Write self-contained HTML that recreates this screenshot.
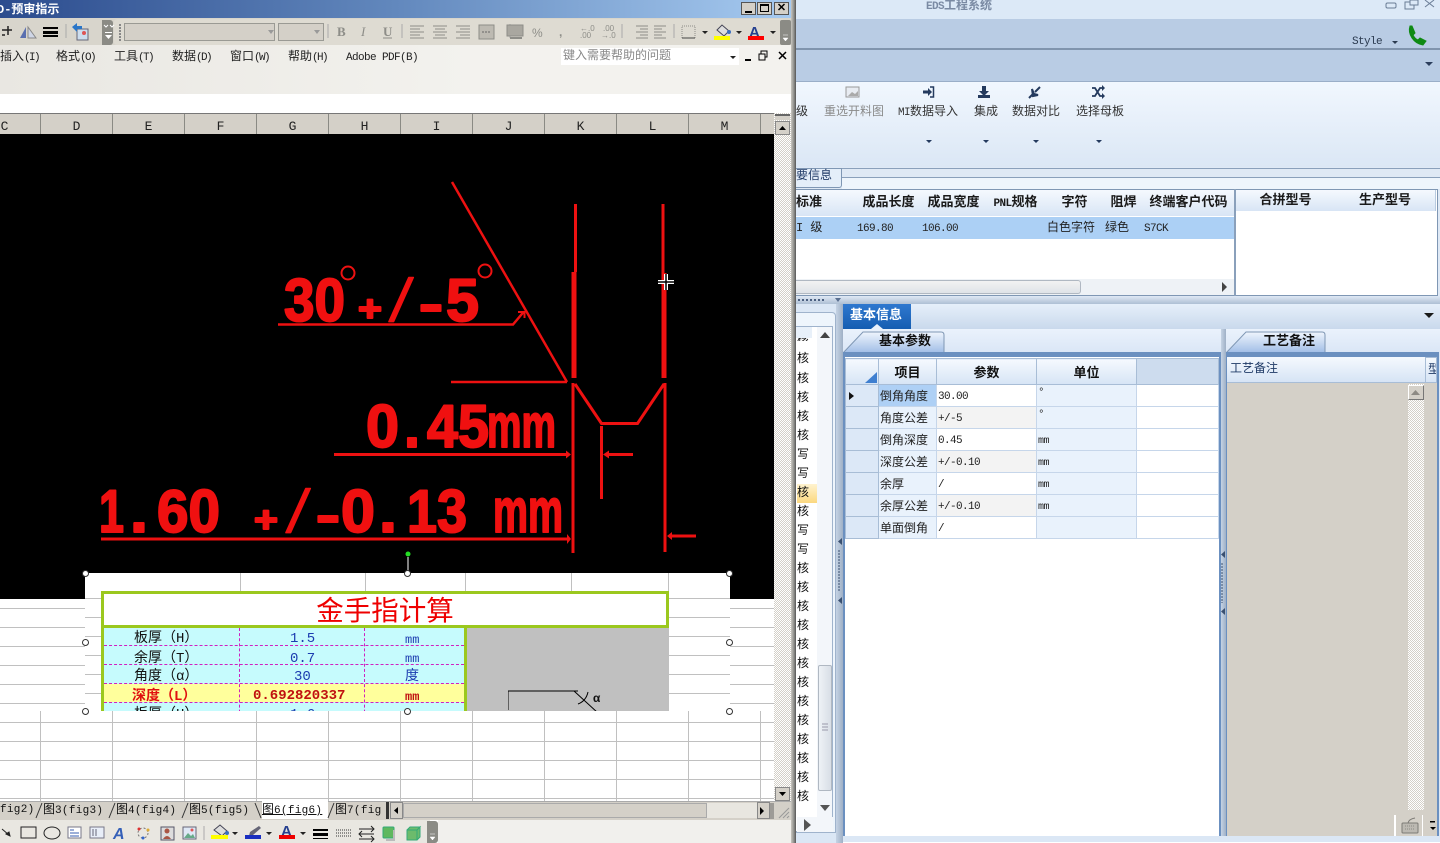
<!DOCTYPE html>
<html lang="zh"><head><meta charset="utf-8"><title>EDS工程系统</title>
<style>
html,body{margin:0;padding:0;width:1440px;height:843px;overflow:hidden;background:#fff}
body{position:relative;font:12px "Liberation Mono","WenQuanYi Zen Hei","Noto Sans CJK SC",monospace;color:#111}
.a{position:absolute}
.t{position:absolute;white-space:nowrap;line-height:14px}
.l{font-size:11px;letter-spacing:-.6px}
.hd{position:absolute;top:114px;height:20px;line-height:25px;width:71px;text-align:center;border-right:1px solid #8a8a84;font-size:13px;color:#222}
.menu{position:absolute;top:50px;white-space:nowrap;line-height:14px;color:#222}
.menu .l{font-size:11px;letter-spacing:-1.600px}
.menu .l.ad{letter-spacing:-.6px}
.hl{position:absolute;left:0;width:774px;height:1px;background:#c0c0c0}
.vl{position:absolute;width:1px;background:#c0c0c0}
.h{position:absolute;width:5px;height:5px;border:1px solid #333;border-radius:50%;background:#fff;z-index:5}
.gh{position:absolute;top:190px;height:26px;line-height:26px;text-align:center;font-weight:bold;font-size:13px;background:linear-gradient(#f5f9fe,#d8e5f5);border-right:1px solid #b9cbe0;color:#1a1a1a;white-space:nowrap;overflow:hidden}
.gc{position:absolute;top:217px;height:22px;line-height:22px;white-space:nowrap;color:#222}
.tabt{font-weight:bold;color:#111;font-size:13px}
table.g{position:absolute;left:845px;top:358px;border-collapse:collapse;table-layout:fixed;width:373px;z-index:2}
table.g th{height:25px;padding:0;background:linear-gradient(#f5f9fe,#d6e4f5);border:1px solid #a8bdd6;font-size:13px;color:#111}
table.g td{height:21px;padding:0 0 0 1px;border:1px solid #c6d6ea;font-size:12px;white-space:nowrap;color:#222;overflow:hidden}
table.g .rh{background:#dce8f7;border-color:#a8bdd6}
table.g .n{background:#e9f2fc}
table.g .u{background:#e9f2fc}
table.g .alt{background:#f3f3f3}
.lst{position:absolute;left:797px;font-size:12px;line-height:14px;color:#111}
.tb{font-size:11px;letter-spacing:.3px}
</style></head><body>

<!-- LEFT WINDOW -->
<div class="a" style="left:0;top:0;width:791px;height:18px;background:linear-gradient(90deg,#2c4c8e,#6288bd 50%,#a6caf0)"></div>
<div class="t" style="left:-3px;top:3px;color:#fff;font-weight:bold">D-预审指示</div>
<div class="a" style="left:741px;top:2px;width:15px;height:13px;background:#d4d0c8;border:1px solid #555;box-sizing:border-box"><div class="a" style="left:3px;top:8px;width:7px;height:2px;background:#000"></div></div>
<div class="a" style="left:757px;top:2px;width:15px;height:13px;background:#d4d0c8;border:1px solid #555;box-sizing:border-box"><div class="a" style="left:2px;top:1px;width:9px;height:8px;border:1px solid #000;border-top-width:2px;box-sizing:border-box"></div></div>
<div class="a" style="left:774px;top:2px;width:15px;height:13px;background:#d4d0c8;border:1px solid #555;box-sizing:border-box;text-align:center;font:bold 11px/11px 'Liberation Sans',sans-serif;color:#000">✕</div>

<!-- toolbar -->
<div class="a" style="left:0;top:18px;width:791px;height:27px;background:#d8d5cc"></div>
<div class="a" style="left:102px;top:20px;width:11px;height:25px;background:#8b8b85;border-radius:0 3px 3px 0"></div>
<div class="a" style="left:114px;top:19px;width:670px;height:26px;background:#dedbd2;border-radius:3px"></div>
<div class="a" style="left:124px;top:23px;width:151px;height:18px;background:#d4d0c8;border:1px solid #9a9a94;box-sizing:border-box"></div>
<div class="a" style="left:278px;top:23px;width:46px;height:18px;background:#d4d0c8;border:1px solid #9a9a94;box-sizing:border-box"></div>
<svg class="a" style="left:0;top:18px" width="795" height="27" viewBox="0 18 795 27">
<g fill="none" stroke="#222" stroke-width="1.500"><path d="M2 30h10M8 26v9M2 35h3"/></g>
<path d="M20 38l6-11v11z" fill="#5a6fb0"/><path d="M28 27l8 11h-8z" fill="#cfd6e6" stroke="#888"/>
<rect x="43" y="27" width="15" height="2" fill="#000"/><rect x="43" y="31" width="15" height="3" fill="#000"/><rect x="43" y="35" width="15" height="2" fill="#000"/>
<path d="M66 24v14" stroke="#aaa"/>
<rect x="77" y="29" width="11" height="11" fill="#cde" stroke="#667"/><path d="M72 27l5-4v3h5v3h-5v3z" fill="#2a76c8"/><circle cx="84" cy="33" r="2" fill="#d55"/>
<path d="M104 25l2 2 2-2M110 25l2 2 2-2" stroke="#fff" fill="none"/><path d="M105 35h7l-3.500 4zM105 32h7v1h-7z" fill="#fff"/>
<path d="M120 24v18" stroke="#888" stroke-width="2" stroke-dasharray="2 1"/>
<path d="M268 30h6l-3 4zM314 30h6l-3 4z" fill="#999"/>
<path d="M328 24v14M402 24v14M510 24v14M622 24v14M674 24v14" stroke="#aaa"/>
<g fill="#8d8d88" font-family="Liberation Serif" font-size="13"><text x="337" y="36" font-weight="bold">B</text><text x="361" y="36" font-style="italic">I</text><text x="383" y="36" font-weight="bold">U</text></g>
<path d="M383 38h9" stroke="#8d8d88"/>
<g stroke="#8d8d88" stroke-width="1"><path d="M410 26h14M410 29h10M410 32h14M410 35h10M410 38h14"/><path d="M433 26h14M435 29h10M433 32h14M435 35h10M433 38h14"/><path d="M456 26h14M460 29h10M456 32h14M460 35h10M456 38h14"/></g>
<rect x="479" y="25" width="15" height="14" fill="#bdbab2" stroke="#8d8d88"/><path d="M482 32h9" stroke="#666" stroke-dasharray="2 1"/>
<rect x="507" y="25" width="16" height="11" fill="#a9a7a0" stroke="#8d8d88"/><path d="M510 38h12" stroke="#8d8d88" stroke-width="2"/>
<g fill="#8d8d88" font-family="Liberation Sans" font-size="12"><text x="532" y="37">%</text><text x="559" y="36" font-weight="bold">,</text></g>
<g fill="#8d8d88" font-family="Liberation Sans" font-size="8"><text x="580" y="31">←.0</text><text x="580" y="38">.00</text><text x="603" y="31">.00</text><text x="601" y="38">→.0</text></g>
<g stroke="#8d8d88"><path d="M636 26h12M640 29h8M636 32h12M640 35h8M636 38h12M654 26h12M654 29h8M654 32h12M654 35h8M654 38h12"/></g>
<rect x="682" y="26" width="13" height="12" fill="none" stroke="#8d8d88" stroke-dasharray="1 1"/><path d="M682 38h13" stroke="#444"/>
<path d="M702 31h6l-3 3zM736 31h6l-3 3zM770 31h6l-3 3z" fill="#222"/>
<path d="M717 30l5-5 7 6-5 5z" fill="#ddd" stroke="#445"/><circle cx="729" cy="32" r="2" fill="#3a6fc0"/><rect x="714" y="36" width="16" height="4" fill="#ff0"/>
<text x="749" y="37" font-family="Liberation Sans" font-weight="bold" font-size="15" fill="#26408f">A</text><rect x="748" y="36" width="16" height="4" fill="#f00"/>
<rect x="780" y="20" width="11" height="25" rx="2" fill="#8b8b85"/><path d="M783 35h5M783 38h5l-2.500 3z" fill="#fff" stroke="#fff" stroke-width=".5"/>
</svg>

<!-- menu -->
<div class="a" style="left:0;top:45px;width:791px;height:49px;background:linear-gradient(90deg,#e9e7e2,#f3f2ee 60%)"></div>
<div class="menu" style="left:0">插入<span class="l">(I)</span></div>
<div class="menu" style="left:56px">格式<span class="l">(O)</span></div>
<div class="menu" style="left:114px">工具<span class="l">(T)</span></div>
<div class="menu" style="left:172px">数据<span class="l">(D)</span></div>
<div class="menu" style="left:230px">窗口<span class="l">(W)</span></div>
<div class="menu" style="left:288px">帮助<span class="l">(H)</span></div>
<div class="menu" style="left:346px"><span class="l ad">Adobe PDF(B)</span></div>
<div class="a" style="left:561px;top:48px;width:178px;height:17px;background:#fff"></div>
<div class="t" style="left:563px;top:49px;color:#888;line-height:14px">键入需要帮助的问题</div>
<svg class="a" style="left:725px;top:48px" width="66" height="17"><path d="M5 8h6l-3 3z" fill="#222"/><rect x="20" y="11" width="6" height="2" fill="#000"/><rect x="36" y="3" width="6" height="6" fill="none" stroke="#000"/><rect x="34" y="6" width="6" height="6" fill="#f3f2ee" stroke="#000"/><path d="M54 4l7 7M61 4l-7 7" stroke="#000" stroke-width="1.500"/></svg>
<div class="a" style="left:0;top:94px;width:791px;height:19px;background:#fff"></div>

<!-- column headers -->
<div class="a" style="left:0;top:113px;width:791px;height:21px;background:#d4d0c8;border-top:1px solid #777;box-sizing:border-box"></div>
<div class="hd" style="left:-31px">C</div><div class="hd" style="left:41px">D</div><div class="hd" style="left:113px">E</div><div class="hd" style="left:185px">F</div><div class="hd" style="left:257px">G</div><div class="hd" style="left:329px">H</div><div class="hd" style="left:401px">I</div><div class="hd" style="left:473px">J</div><div class="hd" style="left:545px">K</div><div class="hd" style="left:617px">L</div><div class="hd" style="left:689px">M</div>

<!-- sheet -->
<div class="a" style="left:0;top:134px;width:774px;height:667px;background:#fff"></div>
<div class="hl" style="top:608px"></div><div class="hl" style="top:627px"></div><div class="hl" style="top:646px"></div><div class="hl" style="top:665px"></div><div class="hl" style="top:684px"></div><div class="hl" style="top:703px"></div><div class="hl" style="top:722px"></div><div class="hl" style="top:741px"></div><div class="hl" style="top:760px"></div><div class="hl" style="top:779px"></div><div class="hl" style="top:798px"></div>
<div class="vl" style="left:40px;top:711px;height:90px"></div><div class="vl" style="left:112px;top:711px;height:90px"></div><div class="vl" style="left:184px;top:711px;height:90px"></div><div class="vl" style="left:256px;top:711px;height:90px"></div><div class="vl" style="left:328px;top:711px;height:90px"></div><div class="vl" style="left:400px;top:711px;height:90px"></div><div class="vl" style="left:472px;top:711px;height:90px"></div><div class="vl" style="left:544px;top:711px;height:90px"></div><div class="vl" style="left:616px;top:711px;height:90px"></div><div class="vl" style="left:688px;top:711px;height:90px"></div><div class="vl" style="left:760px;top:711px;height:90px"></div>

<!-- black drawing -->
<svg class="a" style="left:0;top:134px" width="774" height="465" viewBox="0 134 774 465">
<rect x="0" y="134" width="774" height="465" fill="#000"/>
<g fill="none" stroke="#ee1111" stroke-width="2.500">
<path d="M452 182L567 382"/><path d="M451 382h116"/>
<path d="M278 324.500h235l11-13"/><path d="M518 312h6.500v6" stroke-width="2"/>
<path d="M575.500 204v68" stroke-width="3"/><path d="M574 272v106" stroke-width="5"/>
<path d="M663 204v69" stroke-width="3"/><path d="M664 273v105" stroke-width="5"/>
<path d="M573 383v170" stroke-width="3"/>
<path d="M575 384l26.500 39.500h36L664 384" stroke-width="3"/>
<path d="M665 383v169" stroke-width="3"/>
<path d="M601.500 426v73" stroke-width="3"/>
<path d="M334 454.500h233" stroke-width="3"/><path d="M101 539h466" stroke-width="3"/>
<path d="M606 454.500h27M670 536h26" stroke-width="3"/>
<circle cx="348" cy="273" r="6.500" stroke-width="2"/><circle cx="485" cy="271" r="6.500" stroke-width="2"/>
</g>
<path d="M571 454.500l-5-4v8zM603 454.500l6-4v8zM571 539l-4-5v10zM667 536l5-4v8z" fill="#ee1111"/>
<g fill="#f01010" stroke="#f01010" stroke-width="2" stroke-linejoin="round" font-family="Liberation Sans" font-weight="bold" font-size="60">
<text x="284" y="321" textLength="61" lengthAdjust="spacingAndGlyphs">30</text>
<text x="358" y="321" font-size="36" textLength="24" lengthAdjust="spacingAndGlyphs">+</text>
<text transform="translate(389 321) skewX(-10)" font-weight="normal" stroke-width="1.500">/</text>
<text x="419" y="321" font-size="50" textLength="24" lengthAdjust="spacingAndGlyphs">-</text>
<text x="446" y="321" textLength="33" lengthAdjust="spacingAndGlyphs">5</text>
<text x="366" y="447" textLength="33" lengthAdjust="spacingAndGlyphs">0</text>
<text x="404" y="447" textLength="16" lengthAdjust="spacingAndGlyphs">.</text>
<text x="427" y="447" textLength="62" lengthAdjust="spacingAndGlyphs">45</text>
<text x="487" y="447" font-size="62" textLength="69" lengthAdjust="spacingAndGlyphs">mm</text>
<text x="99" y="532" textLength="25" lengthAdjust="spacingAndGlyphs">1</text>
<text x="130" y="532" textLength="18" lengthAdjust="spacingAndGlyphs">.</text>
<text x="157" y="532" textLength="63" lengthAdjust="spacingAndGlyphs">60</text>
<text x="254" y="532" font-size="36" textLength="24" lengthAdjust="spacingAndGlyphs">+</text>
<text transform="translate(286 532) skewX(-10)" font-weight="normal" stroke-width="1.500">/</text>
<text x="316" y="532" font-size="50" textLength="24" lengthAdjust="spacingAndGlyphs">-</text>
<text x="341" y="532" textLength="34" lengthAdjust="spacingAndGlyphs">0</text>
<text x="379" y="532" textLength="18" lengthAdjust="spacingAndGlyphs">.</text>
<text x="407" y="532" textLength="60" lengthAdjust="spacingAndGlyphs">13</text>
<text x="493" y="532" font-size="62" textLength="70" lengthAdjust="spacingAndGlyphs">mm</text>
</g>
<path d="M658 282h16M666 274v16" stroke="#fff" stroke-width="4"/><path d="M658 282h16M666 274v16" stroke="#000" stroke-width="1.500"/>
<circle cx="408" cy="554" r="2.500" fill="#22dd22"/><path d="M408 557v16" stroke="#fff"/>
</svg>

<!-- embedded excel picture -->
<div class="a" style="left:85px;top:573px;width:645px;height:138px;background:#fff;overflow:hidden">
 <div class="vl" style="left:155px;top:0;height:19px"></div><div class="vl" style="left:280px;top:0;height:19px"></div><div class="vl" style="left:380px;top:0;height:19px"></div><div class="vl" style="left:486px;top:0;height:19px"></div><div class="vl" style="left:583px;top:0;height:19px"></div>
 <div class="a" style="left:0;top:25px;width:17px;height:1px;background:#c0c0c0"></div><div class="a" style="left:0;top:44px;width:17px;height:1px;background:#c0c0c0"></div><div class="a" style="left:0;top:63px;width:17px;height:1px;background:#c0c0c0"></div><div class="a" style="left:0;top:82px;width:17px;height:1px;background:#c0c0c0"></div><div class="a" style="left:0;top:101px;width:17px;height:1px;background:#c0c0c0"></div><div class="a" style="left:0;top:120px;width:17px;height:1px;background:#c0c0c0"></div>
 <div class="a" style="left:583px;top:25px;width:62px;height:1px;background:#c0c0c0"></div><div class="a" style="left:583px;top:44px;width:62px;height:1px;background:#c0c0c0"></div><div class="a" style="left:583px;top:63px;width:62px;height:1px;background:#c0c0c0"></div><div class="a" style="left:583px;top:82px;width:62px;height:1px;background:#c0c0c0"></div><div class="a" style="left:583px;top:101px;width:62px;height:1px;background:#c0c0c0"></div><div class="a" style="left:583px;top:120px;width:62px;height:1px;background:#c0c0c0"></div>
 <!-- frame -->
 <div class="a" style="left:16px;top:18px;width:568px;height:130px;border:3px solid #9bc81e;box-sizing:border-box;background:#c6fbfd">
  <div class="a" style="left:0;top:0;width:562px;height:31px;background:#fff;border-bottom:3px solid #9bc81e;text-align:center;font:27.500px/33px 'Liberation Sans','Noto Sans CJK SC',sans-serif;color:#ee0000">金手指计算</div>
  <div class="a" style="left:360px;top:34px;width:202px;height:100px;background:#c0c0c0;border-left:3px solid #9bc81e"></div>
  <div class="a" style="left:0;top:90px;width:360px;height:18px;background:#ffff9c"></div>
  <div class="a" style="left:0;top:51px;width:360px;border-top:1px dashed #d020c0"></div>
  <div class="a" style="left:0;top:70px;width:360px;border-top:1px dashed #d020c0"></div>
  <div class="a" style="left:0;top:89px;width:360px;border-top:1px dashed #d020c0"></div>
  <div class="a" style="left:0;top:108px;width:360px;border-top:1px dashed #d020c0"></div>
  <div class="a" style="left:135px;top:34px;height:100px;border-left:1px dashed #d020c0"></div>
  <div class="a" style="left:260px;top:34px;height:100px;border-left:1px dashed #d020c0"></div>
  <div class="t" style="left:30px;top:38px;font-size:14px">板厚（H）</div><div class="t" style="left:186px;top:38px;color:#1c3cb0;font-size:14px">1.5</div><div class="t" style="left:301px;top:39px;color:#1c3cb0">mm</div>
  <div class="t" style="left:30px;top:58px;font-size:14px">余厚（T）</div><div class="t" style="left:186px;top:58px;color:#1c3cb0;font-size:14px">0.7</div><div class="t" style="left:301px;top:58px;color:#1c3cb0">mm</div>
  <div class="t" style="left:30px;top:76px;font-size:14px">角度（α）</div><div class="t" style="left:190px;top:76px;color:#1c3cb0;font-size:14px">30</div><div class="t" style="left:301px;top:76px;color:#1c3cb0;font-size:14px">度</div>
  <div class="t" style="left:28px;top:96px;font-size:14px;color:#e01010;font-weight:bold">深度（L）</div><div class="t" style="left:149px;top:95px;font-size:14px;color:#c01010;font-weight:bold">0.692820337</div><div class="t" style="left:301px;top:96px;color:#c01010;font-weight:bold">mm</div>
  <div class="t" style="left:30px;top:114px;font-size:14px">板厚（H）</div><div class="t" style="left:186px;top:114px;color:#1c3cb0;font-size:14px">1.6</div>
  <svg class="a" style="left:404px;top:96px" width="110" height="25"><path d="M0 20V1h70M66 1l24 22M70 14q8-3 10-12" fill="none" stroke="#000"/></svg>
  <div class="t" style="left:489px;top:98px;font-size:12px;font-weight:bold">α</div>
 </div>
</div>
<div class="h" style="left:82px;top:570px"></div><div class="h" style="left:404px;top:570px"></div><div class="h" style="left:726px;top:570px"></div><div class="h" style="left:82px;top:639px"></div><div class="h" style="left:726px;top:639px"></div><div class="h" style="left:82px;top:708px"></div><div class="h" style="left:404px;top:708px"></div><div class="h" style="left:726px;top:708px"></div>

<!-- v scrollbar -->
<div class="a" style="left:774px;top:113px;width:17px;height:688px;background:repeating-conic-gradient(#fff 0 25%,#d4d0c8 0 50%) 0 0/2px 2px"></div>
<div class="a" style="left:775px;top:114px;width:15px;height:6px;background:#d4d0c8;border-top:2px solid #666;box-sizing:border-box"></div>
<div class="a" style="left:775px;top:121px;width:15px;height:14px;background:#d4d0c8;border:1px solid #888;box-sizing:border-box"></div>
<div class="a" style="left:775px;top:787px;width:15px;height:14px;background:#d4d0c8;border:1px solid #888;box-sizing:border-box"></div>
<svg class="a" style="left:775px;top:116px" width="15" height="685"><path d="M4 14h7l-3.500-4z" fill="#000"/><path d="M4 676h7l-3.500 4z" fill="#000"/></svg>
<div class="a" style="left:791px;top:0;width:5px;height:843px;background:linear-gradient(90deg,#c9c7c0,#8d8d8a 60%,#555)"></div>

<!-- sheet tabs -->
<div class="a" style="left:0;top:801px;width:791px;height:19px;background:#d4d0c8;border-top:1px solid #aaa;box-sizing:border-box"></div>
<div class="a" style="left:262px;top:801px;width:66px;height:18px;background:#fff"></div>
<div class="t tb" style="left:0;top:803px">fig2)</div>
<div class="t" style="left:43px;top:803px">图<span class="tb">3(fig3)</span></div>
<div class="t" style="left:116px;top:803px">图<span class="tb">4(fig4)</span></div>
<div class="t" style="left:189px;top:803px">图<span class="tb">5(fig5)</span></div>
<div class="t" style="left:262px;top:803px;text-decoration:underline">图<span class="tb">6(fig6)</span></div>
<div class="t" style="left:335px;top:803px;width:47px;overflow:hidden">图<span class="tb">7(fig</span></div>
<svg class="a" style="left:0;top:801px" width="420" height="19"><path d="M36 17L42 2M109 17L115 2M182 17L188 2M255 2L261 17M328 17L334 2" stroke="#333" fill="none"/></svg>
<div class="a" style="left:386px;top:802px;width:3px;height:17px;background:#333"></div>
<div class="a" style="left:390px;top:802px;width:13px;height:17px;background:#d4d0c8;border:1px solid #888;box-sizing:border-box"></div>
<svg class="a" style="left:390px;top:802px" width="13" height="17"><path d="M8 5v7l-4-3.500z" fill="#000"/></svg>
<div class="a" style="left:403px;top:803px;width:304px;height:15px;background:#d4d0c8;border:1px solid #aaa;box-sizing:border-box"></div>
<div class="a" style="left:707px;top:803px;width:50px;height:15px;background:#e8e6e0"></div>
<div class="a" style="left:757px;top:802px;width:13px;height:17px;background:#d4d0c8;border:1px solid #888;box-sizing:border-box"></div>
<svg class="a" style="left:757px;top:802px" width="34" height="18"><path d="M3 5v8l4-4z" fill="#000"/><path d="M14 1v16M16 1v16" stroke="#666"/><path d="M22 16l10-10M26 16l6-6M30 16l2-2" stroke="#999"/></svg>

<!-- bottom toolbar -->
<div class="a" style="left:0;top:820px;width:430px;height:23px;background:#e9e7e1"></div>
<div class="a" style="left:427px;top:821px;width:11px;height:22px;background:#8b8b85;border-radius:0 3px 3px 0"></div>
<div class="a" style="left:438px;top:820px;width:353px;height:23px;background:#f1f0ed"></div>
<svg class="a" style="left:0;top:820px" width="440" height="23">
<path d="M2 9l7 6M6 14l4 2-1-4z" stroke="#222" fill="#222"/>
<rect x="21" y="7" width="15" height="11" fill="none" stroke="#222"/><ellipse cx="52" cy="13" rx="8" ry="6" fill="none" stroke="#222"/>
<rect x="68" y="7" width="13" height="11" fill="#fff" stroke="#778"/><path d="M70 10h4M70 13h9M70 16h9" stroke="#3a5fb0"/>
<rect x="90" y="7" width="14" height="11" fill="#e8eef8" stroke="#778"/><path d="M93 9v7M96 9v7" stroke="#667"/>
<text x="113" y="19" font-family="Liberation Sans" font-weight="bold" font-style="italic" font-size="16" fill="#3560b8">A</text>
<circle cx="143" cy="13" r="5" fill="none" stroke="#777" stroke-dasharray="2 2"/><circle cx="139" cy="9" r="1.500" fill="#d33"/><circle cx="148" cy="10" r="1.500" fill="#da3"/><circle cx="143" cy="18" r="1.500" fill="#36c"/>
<rect x="161" y="7" width="13" height="13" fill="#ddd" stroke="#556"/><circle cx="167" cy="11" r="2.500" fill="#a54"/><path d="M163 19q4-6 8 0z" fill="#a54"/>
<rect x="183" y="7" width="13" height="12" fill="#dfe8f5" stroke="#667"/><path d="M184 18l4-5 3 3 2-2 2 4z" fill="#6a8"/><circle cx="192" cy="10" r="1.500" fill="#d55"/>
<path d="M204 6v14" stroke="#aaa"/>
<path d="M214 10l6-5 7 6-5 5z" fill="#ddd" stroke="#445"/><circle cx="227" cy="13" r="2" fill="#3a6fc0"/><rect x="211" y="15" width="17" height="4" fill="#ff0"/>
<path d="M232 12h6l-3 3zM266 12h6l-3 3zM300 12h6l-3 3z" fill="#222"/>
<path d="M250 12l9-6 2 2-8 7-4 1z" fill="#667"/><rect x="245" y="15" width="16" height="4" fill="#1a2fc0"/>
<text x="281" y="16" font-family="Liberation Sans" font-weight="bold" font-size="15" fill="#26408f">A</text><rect x="279" y="15" width="16" height="4" fill="#e00"/>
<rect x="313" y="9" width="15" height="2" fill="#000"/><rect x="313" y="13" width="15" height="3" fill="#000"/><rect x="313" y="18" width="15" height="1" fill="#000"/>
<path d="M336 10h15M336 13h15M336 16h15" stroke="#333" stroke-dasharray="1 1"/>
<path d="M359 9h15M359 14h15M359 19h15M371 6l3 3-3 3M362 11l-3 3 3 3M371 16l3 3-3 3" stroke="#222" fill="none"/>
<rect x="383" y="7" width="11" height="11" rx="1" fill="#5fb85f" stroke="#3a7"/><path d="M394 10v10H386" stroke="#bbb" stroke-width="2" fill="none"/>
<path d="M407 10h10v10h-10zM407 10l3-3h10l-3 3M417 10l3-3v10l-3 3" fill="#6cbb6c" stroke="#3a7"/>
<path d="M430 14h5M430 17h5l-2.500 3z" fill="#fff" stroke="#fff" stroke-width=".5"/>
</svg>

<!-- RIGHT WINDOW -->
<div class="a" style="left:796px;top:0;width:644px;height:19px;background:#dce9f7"></div>
<div class="t" style="left:926px;top:-1px;color:#7a8aa3;font-weight:bold"><span class="l">EDS</span>工程系统</div>
<svg class="a" style="left:1380px;top:0" width="60" height="12"><rect x="6" y="3" width="10" height="5" rx="1.500" fill="none" stroke="#6a7d96"/><rect x="25" y="2" width="9" height="7" fill="none" stroke="#6a7d96"/><rect x="30" y="0" width="8" height="5" fill="#dce9f7" stroke="#6a7d96"/><path d="M45 0l9 7M54 0l-9 7" stroke="#6a7d96"/></svg>
<div class="a" style="left:796px;top:19px;width:644px;height:29px;background:#b9cce4"></div>
<div class="a" style="left:796px;top:48px;width:644px;height:2px;background:#8094ad"></div>
<div class="a" style="left:796px;top:50px;width:644px;height:31px;background:#b9cce4"></div>
<div class="a" style="left:796px;top:81px;width:644px;height:1px;background:#9aaec8"></div>
<div class="t" style="left:1352px;top:34px;color:#2b3a4f"><span class="l">Style</span></div>
<svg class="a" style="left:1380px;top:20px" width="60" height="48"><path d="M12 21h6l-3 3z" fill="#2b3a4f"/><path d="M30 6q-2 6 2 12t11 7l3-4-6-3-2 2q-3-1-5-5l2-2-3-7z" fill="#0f8a14" stroke="#0f8a14"/><path d="M45 42h8l-4 4z" fill="#2c3e5c"/></svg>

<div class="a" style="left:796px;top:82px;width:644px;height:85px;background:linear-gradient(#f1f7fe,#dbe7f5)"></div>
<div class="t" style="left:796px;top:105px;color:#333">级</div>
<div class="t" style="left:824px;top:105px;color:#8a8a8a">重选开料图</div>
<div class="t" style="left:898px;top:105px;color:#333"><span class="l">MI</span>数据导入</div>
<div class="t" style="left:974px;top:105px;color:#333">集成</div>
<div class="t" style="left:1012px;top:105px;color:#333">数据对比</div>
<div class="t" style="left:1076px;top:105px;color:#333">选择母板</div>
<svg class="a" style="left:796px;top:84px" width="340" height="62">
<rect x="50" y="3" width="13" height="10" fill="#e8ecf2" stroke="#999"/><path d="M52 12l4-4 3 2 3-3v5z" fill="#aaa"/>
<path d="M127 6.500h5V4l4 4-4 4V9.500h-5z" fill="#243a5e"/><path d="M134 3h3.500v10H134" fill="none" stroke="#243a5e" stroke-width="1.500"/>
<path d="M186 2h4v5h3l-5 5-5-5h3zM182 11h12v3h-12z" fill="#243a5e"/>
<path d="M244 3l-5 5M233 14l4-4M236 5l2 5 4 1-5 1z" stroke="#243a5e" stroke-width="2" fill="#243a5e"/>
<path d="M296 4h3l5 8h3M296 12h3l5-8h3" stroke="#243a5e" stroke-width="1.800" fill="none"/><path d="M306 1l3 3-3 3zM306 9l3 3-3 3z" fill="#243a5e"/>
<path d="M130 56h6l-3 3zM187 56h6l-3 3zM237 56h6l-3 3zM300 56h6l-3 3z" fill="#243a5e"/>
</svg>

<!-- summary section -->
<div class="a" style="left:796px;top:167px;width:644px;height:137px;background:#dfe9f5"></div>
<div class="a" style="left:796px;top:168px;width:644px;height:1px;background:#8aa0bb"></div>
<div class="a" style="left:796px;top:168px;width:46px;height:20px;background:#e4eef9;border:1px solid #7f97b4;border-width:1px 1px 1px 0;box-sizing:border-box;border-radius:0 0 3px 0;color:#1f3a66;line-height:14px;white-space:nowrap">要信息</div>
<div class="a" style="left:842px;top:177px;width:598px;height:12px;border-top:1px solid #8aa0bb;box-sizing:border-box;background:#eef5fc"></div>
<div class="a" style="left:796px;top:189px;width:642px;height:107px;background:#fff;border:1px solid #7f97b4;border-left:0;box-sizing:border-box"></div>
<div class="gh" style="left:796px;width:60px;text-align:left">标准</div>
<div class="gh" style="left:856px;width:65px">成品长度</div>
<div class="gh" style="left:921px;width:65px">成品宽度</div>
<div class="gh" style="left:986px;width:59px"><span class="l">PNL</span>规格</div>
<div class="gh" style="left:1045px;width:59px">字符</div>
<div class="gh" style="left:1104px;width:39px">阻焊</div>
<div class="gh" style="left:1143px;width:91px">终端客户代码</div>
<div class="a" style="left:796px;top:217px;width:438px;height:22px;background:#acd0f5"></div>
<div class="gc" style="left:796px">I 级</div>
<div class="gc" style="left:857px"><span class="l">169.80</span></div>
<div class="gc" style="left:922px"><span class="l">106.00</span></div>
<div class="gc" style="left:1047px">白色字符</div>
<div class="gc" style="left:1105px">绿色</div>
<div class="gc" style="left:1144px"><span class="l">S7CK</span></div>
<div class="a" style="left:796px;top:279px;width:438px;height:16px;background:#eef2f6"></div>
<div class="a" style="left:796px;top:280px;width:285px;height:14px;background:linear-gradient(#f2f2f2,#dfe3e8);border:1px solid #b0b8c2;border-left:0;border-radius:0 3px 3px 0;box-sizing:border-box"></div>
<svg class="a" style="left:1220px;top:282px" width="10" height="11"><path d="M2 0l5 5-5 5z" fill="#444"/></svg>
<div class="a" style="left:1234px;top:189px;width:2px;height:107px;background:#8aa0bb"></div>
<div class="gh" style="left:1236px;width:99px;top:190px;height:21px;line-height:21px">合拼型号</div>
<div class="gh" style="left:1335px;width:100px;top:190px;height:21px;line-height:21px">生产型号</div>

<!-- splitter -->
<div class="a" style="left:796px;top:296px;width:644px;height:8px;background:linear-gradient(#dfe9f5,#aebfd4)"></div>
<div class="a" style="left:798px;top:299px;width:28px;height:2px;background:repeating-linear-gradient(90deg,#4a5f80 0 2px,transparent 2px 4px)"></div>
<svg class="a" style="left:832px;top:298px" width="12" height="6"><path d="M3 0h6l-3 4z" fill="#5a6f90"/></svg>

<!-- lower left list -->
<div class="a" style="left:796px;top:304px;width:644px;height:539px;background:#dbe7f5"></div>
<div class="a" style="left:796px;top:312px;width:40px;height:521px;background:#eef5fc;border:1px solid #9fb3cc;border-left:0;border-radius:0 4px 0 0;box-sizing:border-box"></div>
<div class="a" style="left:796px;top:326px;width:37px;height:506px;background:#fff;border:1px solid #9fb3cc;border-left:0;box-sizing:border-box;overflow:hidden"></div>
<div class="a" style="left:797px;top:484px;width:20px;height:19px;background:linear-gradient(#fff3cf,#fbd880)"></div>
<div class="a" style="left:796px;top:327px;width:21px;height:14px;overflow:hidden"><div class="lst" style="left:1px;top:6px">核</div></div>
<div class="a" style="left:796px;top:327px;width:16px;height:11px;background:#e8f0f9"></div>
<div class="lst" style="top:352px">核</div><div class="lst" style="top:372px">核</div><div class="lst" style="top:391px">核</div><div class="lst" style="top:410px">核</div><div class="lst" style="top:429px">核</div><div class="lst" style="top:448px">写</div><div class="lst" style="top:467px">写</div><div class="lst" style="top:486px">核</div><div class="lst" style="top:505px">核</div><div class="lst" style="top:524px">写</div><div class="lst" style="top:543px">写</div><div class="lst" style="top:562px">核</div><div class="lst" style="top:581px">核</div><div class="lst" style="top:600px">核</div><div class="lst" style="top:619px">核</div><div class="lst" style="top:638px">核</div><div class="lst" style="top:657px">核</div><div class="lst" style="top:676px">核</div><div class="lst" style="top:695px">核</div><div class="lst" style="top:714px">核</div><div class="lst" style="top:733px">核</div><div class="lst" style="top:752px">核</div><div class="lst" style="top:771px">核</div><div class="lst" style="top:790px">核</div>
<div class="a" style="left:817px;top:327px;width:15px;height:490px;background:#f3f6fa"></div>
<div class="a" style="left:818px;top:665px;width:14px;height:126px;background:linear-gradient(90deg,#eef2f6,#d8dee6);border:1px solid #b0b8c2;border-radius:2px;box-sizing:border-box"></div>
<svg class="a" style="left:818px;top:330px" width="14" height="490"><path d="M2 8h10l-5-6z" fill="#444"/><path d="M2 475h10l-5 6z" fill="#555"/><path d="M4 394h6M4 397h6M4 400h6" stroke="#99a"/></svg>
<div class="a" style="left:797px;top:817px;width:36px;height:15px;background:#f3f6fa"></div>
<svg class="a" style="left:802px;top:818px" width="14" height="14"><path d="M2 1l7 6-7 6z" fill="#555"/></svg>
<div class="a" style="left:836px;top:304px;width:7px;height:539px;background:linear-gradient(90deg,#c5d3e4,#9fb0c6)"></div>
<svg class="a" style="left:836px;top:535px" width="7" height="75"><path d="M6 3v7l-4-3.500zM6 62v7l-4-3.500z" fill="#3a5070"/><path d="M3 15v42" stroke="#3a5070" stroke-dasharray="2 1"/></svg>

<!-- lower main panel -->
<div class="a" style="left:843px;top:304px;width:597px;height:25px;background:linear-gradient(#e6effa,#c9d9ec)"></div>
<div class="a" style="left:843px;top:304px;width:68px;height:25px;background:linear-gradient(#2f78cf,#155db1);color:#fff;font-weight:bold;font-size:13px;line-height:24px;text-align:center;text-indent:-2px">基本信息</div>
<svg class="a" style="left:870px;top:323px" width="14" height="6"><path d="M1 6l6-5 6 5z" fill="#eaf2fc"/></svg>
<svg class="a" style="left:1422px;top:311px" width="14" height="9"><path d="M2 2h10l-5 5z" fill="#1a1a1a"/></svg>

<div class="a" style="left:843px;top:329px;width:378px;height:507px;background:#dfeafa"></div>
<div class="a" style="left:843px;top:329px;width:378px;height:24px;background:linear-gradient(#eaf2fc,#dae6f6)"></div>
<svg class="a" style="left:843px;top:331px" width="104" height="22"><defs><linearGradient id="tg1" x1="0" y1="0" x2="0" y2="1"><stop offset="0" stop-color="#eff5fd"/><stop offset="1" stop-color="#a0bde6"/></linearGradient></defs><path d="M0 22L20 1h78q3 0 3 3v18z" fill="url(#tg1)" stroke="#7f97b4"/></svg>
<div class="t tabt" style="left:879px;top:335px">基本参数</div>
<div class="a" style="left:843px;top:352px;width:378px;height:484px;background:#fff;border:solid #6b90c0;border-width:5px 2px 0 2px;box-sizing:border-box"></div>
<table class="g">
<colgroup><col style="width:33px"><col style="width:58px"><col style="width:100px"><col style="width:100px"><col style="width:82px"></colgroup>
<tr><th style="position:relative"><svg style="position:absolute;right:1px;bottom:1px" width="12" height="12"><path d="M0 12L12 1v11z" fill="#3f7fd0"/></svg></th><th>项目</th><th>参数</th><th>单位</th><th style="background:#cddcee"></th></tr>
<tr><td class="rh" style="position:relative"><svg style="position:absolute;left:3px;top:7px" width="6" height="8"><path d="M0 0l5 4-5 4z" fill="#111"/></svg></td><td style="background:#aed0f5">倒角角度</td><td><span class="l">30.00</span></td><td class="u" style="vertical-align:top"><span class="l">°</span></td><td></td></tr>
<tr><td class="rh"></td><td class="n">角度公差</td><td class="alt"><span class="l">+/-5</span></td><td class="u" style="vertical-align:top"><span class="l">°</span></td><td></td></tr>
<tr><td class="rh"></td><td class="n">倒角深度</td><td><span class="l">0.45</span></td><td class="u"><span class="l" style="font-size:10px;letter-spacing:-.5px">mm</span></td><td></td></tr>
<tr><td class="rh"></td><td class="n">深度公差</td><td class="alt"><span class="l">+/-0.10</span></td><td class="u"><span class="l" style="font-size:10px;letter-spacing:-.5px">mm</span></td><td></td></tr>
<tr><td class="rh"></td><td class="n">余厚</td><td><span class="l">/</span></td><td class="u"><span class="l" style="font-size:10px;letter-spacing:-.5px">mm</span></td><td></td></tr>
<tr><td class="rh"></td><td class="n">余厚公差</td><td class="alt"><span class="l">+/-0.10</span></td><td class="u"><span class="l" style="font-size:10px;letter-spacing:-.5px">mm</span></td><td></td></tr>
<tr><td class="rh"></td><td class="n">单面倒角</td><td><span class="l">/</span></td><td class="u"></td><td></td></tr>
</table>

<div class="a" style="left:1221px;top:329px;width:5px;height:514px;background:linear-gradient(90deg,#c5d3e4,#9fb0c6)"></div>
<svg class="a" style="left:1220px;top:548px" width="6" height="70"><path d="M5 3v7l-4-3.500zM5 60v7l-4-3.500z" fill="#3a5070"/><path d="M2 15v40" stroke="#3a5070" stroke-dasharray="2 1"/></svg>

<!-- right remark panel -->
<div class="a" style="left:1226px;top:329px;width:214px;height:24px;background:linear-gradient(#eaf2fc,#dae6f6)"></div>
<svg class="a" style="left:1226px;top:331px" width="102" height="22"><defs><linearGradient id="tg2" x1="0" y1="0" x2="0" y2="1"><stop offset="0" stop-color="#eff5fd"/><stop offset="1" stop-color="#a0bde6"/></linearGradient></defs><path d="M0 22L20 1h76q3 0 3 3v18z" fill="url(#tg2)" stroke="#7f97b4"/></svg>
<div class="t tabt" style="left:1263px;top:335px">工艺备注</div>
<div class="a" style="left:1226px;top:352px;width:213px;height:484px;background:#d4d0c8;border:solid #6b90c0;border-width:5px 2px 0 1px;box-sizing:border-box"></div>
<div class="a" style="left:1227px;top:357px;width:198px;height:26px;background:linear-gradient(#f5f9fe,#d6e4f5);border-bottom:1px solid #a8bdd6;box-sizing:border-box;line-height:25px;color:#1f3a66;padding-left:3px">工艺备注</div>
<div class="a" style="left:1425px;top:357px;width:12px;height:26px;background:linear-gradient(#f5f9fe,#d6e4f5);border:1px solid #a8bdd6;box-sizing:border-box;overflow:hidden;line-height:24px;font-size:12px;color:#1f3a66;text-indent:2px">型</div>
<div class="a" style="left:1408px;top:384px;width:16px;height:426px;background:repeating-conic-gradient(#fff 0 25%,#d4d0c8 0 50%) 0 0/2px 2px"></div>
<div class="a" style="left:1408px;top:385px;width:16px;height:15px;background:#d4d0c8;border:1px solid;border-color:#fff #777 #777 #fff;box-sizing:border-box"></div>
<svg class="a" style="left:1410px;top:388px" width="12" height="9"><path d="M1 7h9l-4.500-5z" fill="#8d8a84"/></svg>
<div class="a" style="left:1394px;top:815px;width:2px;height:21px;background:#fff"></div>
<div class="a" style="left:1422px;top:815px;width:1px;height:21px;background:#fff"></div>
<svg class="a" style="left:1400px;top:816px" width="40" height="20"><rect x="2" y="7" width="16" height="10" rx="1" fill="#bcb9b2" stroke="#7d7b76"/><path d="M5 10h10M5 13h10" stroke="#8d8a84" stroke-dasharray="1 1"/><path d="M8 7q1-4 7-5" fill="none" stroke="#7d7b76"/><rect x="30" y="5" width="5" height="1.500" fill="#000"/><path d="M30 11h6l-3 3z" fill="#000"/></svg>
<div class="a" style="left:843px;top:836px;width:597px;height:6px;background:#dbe7f5"></div>
<div class="a" style="left:843px;top:842px;width:597px;height:1px;background:#fff"></div>
</body></html>
